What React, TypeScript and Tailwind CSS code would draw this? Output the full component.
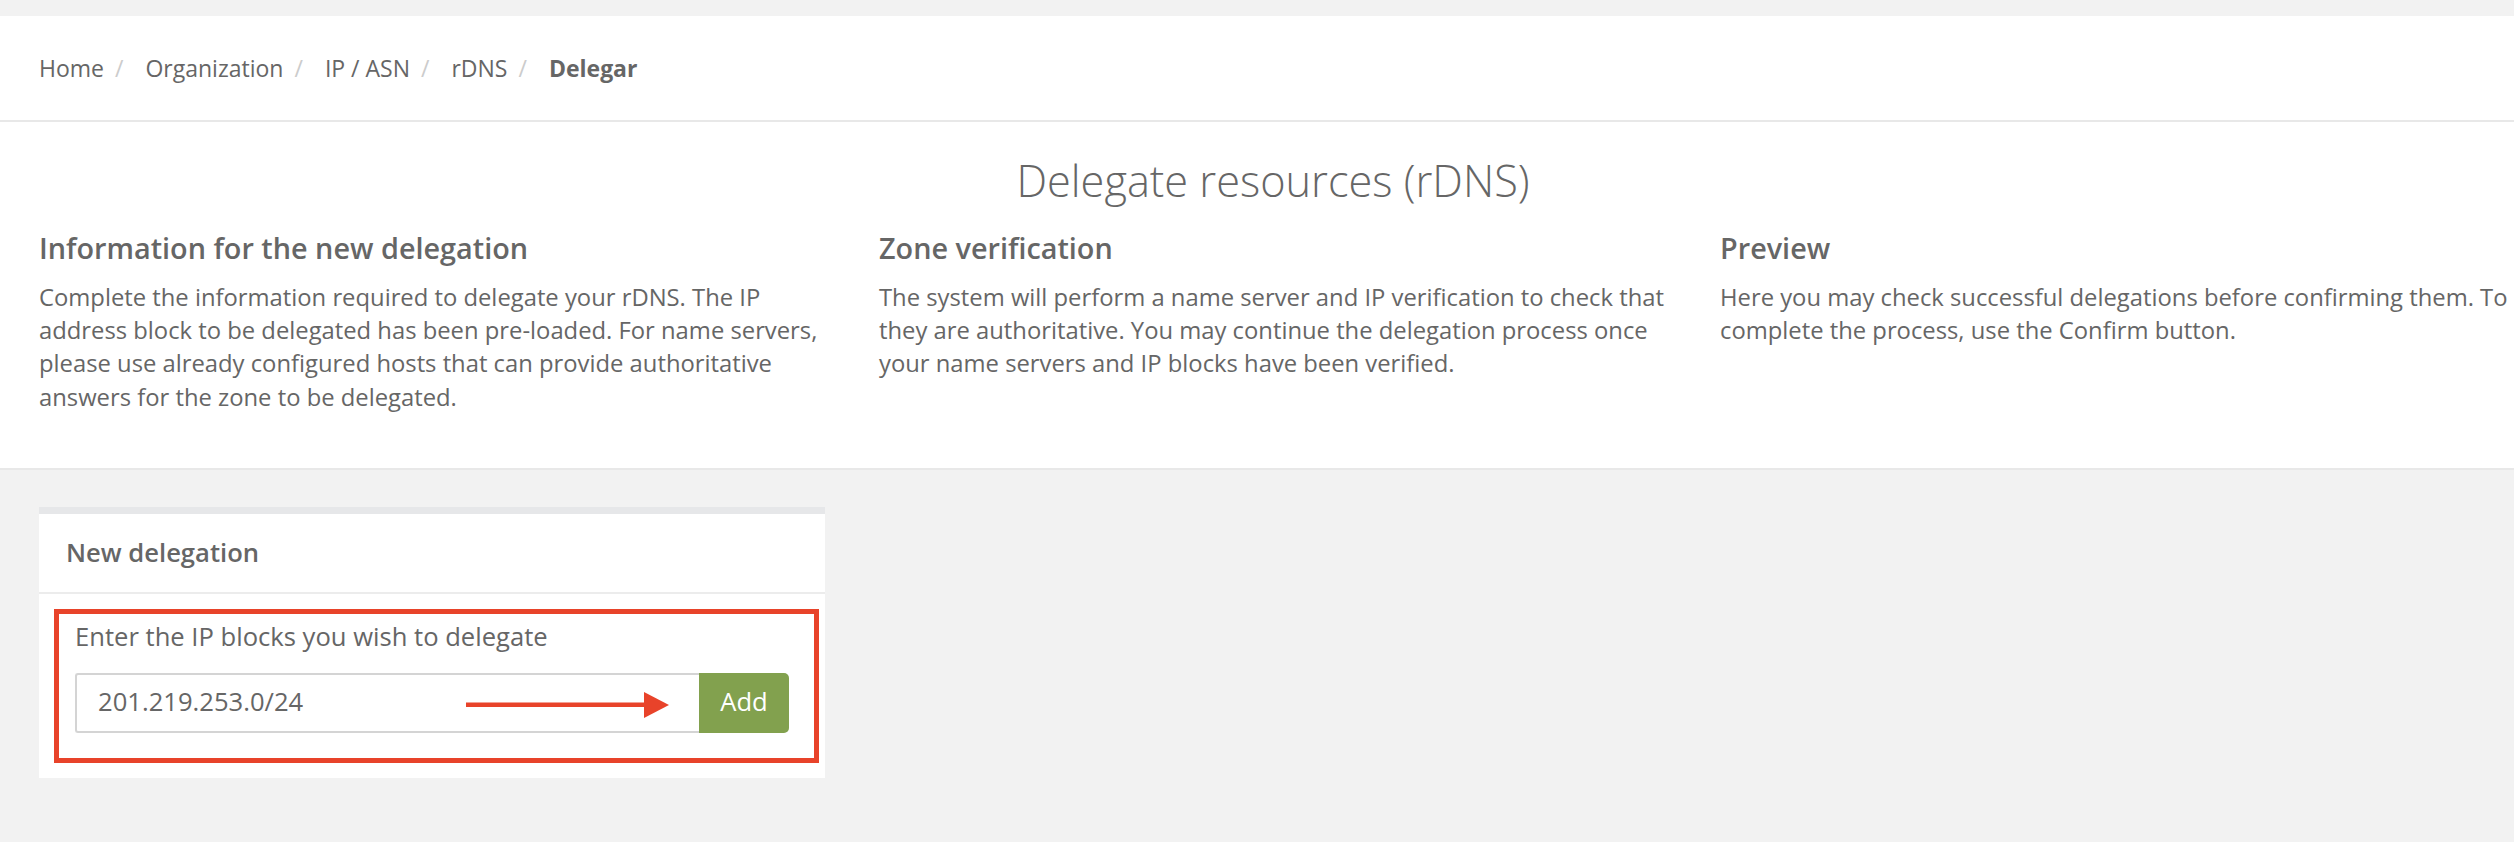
const crumbs = ["Home", "Organization", "IP / ASN", "rDNS"];

const columns = [
  {
    title: "Information for the new delegation",
    text: "Complete the information required to delegate your rDNS. The IP address block to be delegated has been pre-loaded. For name servers, please use already configured hosts that can provide authoritative answers for the zone to be delegated.",
  },
  {
    title: "Zone verification",
    text: "The system will perform a name server and IP verification to check that they are authoritative. You may continue the delegation process once your name servers and IP blocks have been verified.",
  },
  {
    title: "Preview",
    text: "Here you may check successful delegations before confirming them. To complete the process, use the Confirm button.",
  },
];

function Breadcrumb() {
  return (
    <nav className="flex items-center text-[23px] leading-none text-[#666]">
      {crumbs.map((c) => (
        <span key={c} className="flex items-center">
          <span>{c}</span>
          <span className="ml-[11px] mr-[22px] text-[#ccc]">/</span>
        </span>
      ))}
      <span className="font-bold">Delegar</span>
    </nav>
  );
}

function Arrow() {
  return (
    <svg
      className="pointer-events-none absolute left-[391px] top-[19px]"
      width="203"
      height="26"
      viewBox="0 0 203 26"
    >
      <rect x="0" y="10.5" width="180" height="4.5" fill="#e8432a" />
      <polygon points="178,0 203,13 178,26" fill="#e8432a" />
    </svg>
  );
}

function NewDelegationCard() {
  return (
    <div className="w-[786px] border-t-[7px] border-[#e6e7e9] bg-white">
      <div className="flex h-[80px] items-center border-b-2 border-[#ececec] px-[27px]">
        <h3 className="text-[25.6px] font-semibold leading-[1.1] text-[#666]">New delegation</h3>
      </div>
      <div className="pb-[15px] pl-[15px] pr-[6px] pt-[15px]">
        <div className="border-[5px] border-[#e8432a] pb-[25px] pl-[16px] pr-[25px] pt-[8px]">
          <p className="text-[25.6px] leading-[1.2] text-[#666]">Enter the IP blocks you wish to delegate</p>
          <div className="relative mt-[20px] flex h-[60px]">
            <div className="flex w-[624px] items-center rounded-l-[3px] border-2 border-r-0 border-[#d4d4d4] pl-[21px] text-[25.6px] text-[#666]">
              201.219.253.0/24
            </div>
            <button className="flex w-[90px] items-center justify-center rounded-r-[5px] bg-[#82a14e] text-[25.6px] text-white">
              Add
            </button>
            <Arrow />
          </div>
        </div>
      </div>
    </div>
  );
}

export default function App() {
  return (
    <div
      className="min-h-[842px] w-full bg-[#f2f2f2] pt-[16px]"
      style={{ fontFamily: '"Open Sans", "Liberation Sans", sans-serif' }}
    >
      {/* Breadcrumb bar */}
      <header className="flex h-[106px] items-center border-b-2 border-[#e8e8e8] bg-white pl-[39px]">
        <Breadcrumb />
      </header>

      {/* Intro */}
      <section className="border-b-2 border-[#e8e8e8] bg-white pb-[54px] pt-[35px]">
        <h1 className="pl-[32px] text-center text-[43.3px] font-light leading-[1.1] text-[#666]">
          Delegate resources (rDNS)
        </h1>
        <div className="mt-[27px] grid grid-cols-[840px_841px_1fr]">
          {columns.map((col, i) => (
            <div key={col.title} className={i === 2 ? "pl-[39px]" : "pl-[39px] pr-[11px]"}>
              <h2 className="text-[28.8px] font-semibold leading-[1.1] text-[#666]">{col.title}</h2>
              <p className="mt-[17.5px] text-[23.8px] leading-[33.3px] text-[#666]">{col.text}</p>
            </div>
          ))}
        </div>
      </section>

      <main className="pl-[39px] pt-[37px]">
        <NewDelegationCard />
      </main>
    </div>
  );
}
